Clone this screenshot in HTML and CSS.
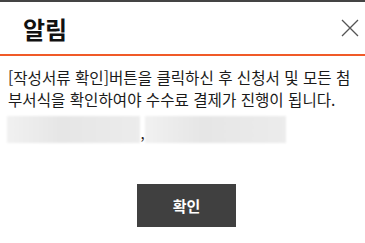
FILE: index.html
```html
<!DOCTYPE html>
<html lang="ko">
<head>
  <meta charset="UTF-8">
  <title>알림</title>
  <link rel="stylesheet" href="styles.css">
</head>
<body>
  <div class="popup">
    <div class="popup-head">
      <h2>알림</h2>
      <button class="close" type="button" aria-label="닫기">
        <svg width="18" height="18" viewBox="0 0 18 18">
          <path d="M1 1L17 17M17 1L1 17" stroke="#555" stroke-width="1.3" fill="none"/>
        </svg>
      </button>
    </div>
    <div class="popup-body">
      <p class="msg">[작성서류 확인]버튼을 클릭하신 후 신청서 및 모든 첨부서식을 확인하여야 수수료 결제가 진행이 됩니다.</p>
      <div class="files">
        <span class="blur b1"></span><span class="comma">,</span><span class="blur b2"></span>
      </div>
    </div>
    <div class="popup-foot">
      <button class="btn" type="button">확인</button>
    </div>
  </div>
</body>
</html>
```

FILE: styles.css
```css
body {
  margin: 0;
  background: #fff;
  font-family: "Noto Sans CJK KR", "Noto Sans", sans-serif;
  color: #222;
}
.popup {
  border-top: 2px solid #444;
  width: 365px;
}
.popup-head {
  height: 52px;
  display: flex;
  align-items: center;
  justify-content: space-between;
  padding: 0 5px 0 23px;
  border-bottom: 2px solid #f05a28;
}
.popup-head h2 {
  margin: 0;
  font-size: 24px;
  font-weight: 700;
  color: #111;
  line-height: 1;
  padding-top: 2px;
}
.close {
  border: 0;
  background: none;
  padding: 0;
  width: 20px;
  height: 20px;
  display: flex;
  align-items: center;
  justify-content: center;
}
.popup-body {
  padding: 10px 8px 0 8px;
}
.msg {
  margin: 0;
  font-size: 15.6px;
  line-height: 22px;
  word-break: break-all;
  color: #1a1a1a;
}
.files {
  display: flex;
  align-items: flex-end;
  margin-top: 6px;
}
.blur {
  display: block;
  height: 27px;
  background: linear-gradient(90deg, #f1f1f1, #e6e6e6 40%, #ececec);
  filter: blur(1px);
}
.b1 {
  width: 133px;
  margin-left: -1px;
}
.b2 {
  width: 141px;
}
.comma {
  width: 5px;
  font-size: 15px;
  line-height: 20px;
  color: #222;
  text-align: center;
}
.popup-foot {
  display: flex;
  justify-content: center;
  padding: 41px 0 0 8px;
}
.btn {
  width: 99px;
  height: 43px;
  border: 0;
  background: #404040;
  color: #fff;
  font-family: "Noto Sans CJK KR", sans-serif;
  font-size: 15px;
  font-weight: 700;
}
```
